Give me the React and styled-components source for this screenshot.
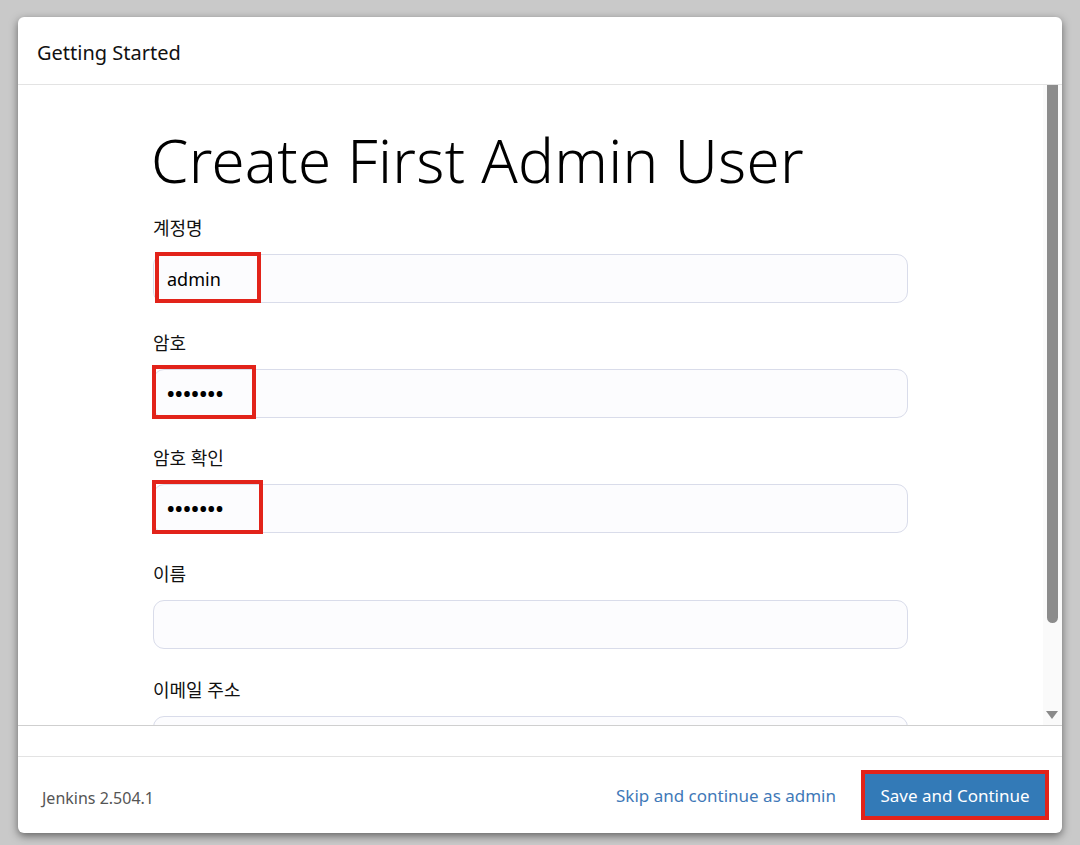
import styled, { createGlobalStyle } from 'styled-components';

const GlobalStyle = createGlobalStyle`
  html, body {
    margin: 0;
    padding: 0;
    background: #c9c9c9;
  }
  * {
    box-sizing: border-box;
  }
`;

const fields = [
  { id: 'username', label: '계정명', value: 'admin', type: 'text', mark: 106 },
  { id: 'password', label: '암호', value: '•••••••', type: 'password', mark: 104 },
  { id: 'confirm', label: '암호 확인', value: '•••••••', type: 'password', mark: 111 },
  { id: 'fullname', label: '이름', value: '', type: 'text' },
  { id: 'email', label: '이메일 주소', value: '', type: 'text' },
];

const App = () => {
  return (
    <>
      <GlobalStyle />
      <Page>
        <Dialog>
          <Header>
            <HeaderTitle>Getting Started</HeaderTitle>
          </Header>
          <Body>
            <ScrollArea>
              <Form>
                <Title>Create First Admin User</Title>
                {fields.map((field) => (
                  <Field key={field.id}>
                    <Label>{field.label}</Label>
                    <InputBox>
                      <InputText $dots={field.type === 'password'}>{field.value}</InputText>
                      {field.mark && (
                        <Highlight style={{ width: field.mark }} $type={field.type} />
                      )}
                    </InputBox>
                  </Field>
                ))}
              </Form>
            </ScrollArea>
            <ScrollTrack>
              <ScrollThumb />
              <ScrollArrow />
            </ScrollTrack>
          </Body>
          <Spacer />
          <Footer>
            <Version>Jenkins 2.504.1</Version>
            <Actions>
              <SkipLink href='#'>Skip and continue as admin</SkipLink>
              <ButtonFrame>
                <SaveButton>Save and Continue</SaveButton>
              </ButtonFrame>
            </Actions>
          </Footer>
        </Dialog>
      </Page>
    </>
  );
};

export default App;

const Page = styled.div`
  width: 1080px;
  height: 845px;
  padding: 17px 18px 12px 18px;
  font-family: 'Noto Sans', 'Noto Sans CJK KR', sans-serif;
`;

const Dialog = styled.div`
  width: 1044px;
  height: 816px;
  background: #fff;
  border-radius: 6px;
  box-shadow: 0 3px 9px rgba(0, 0, 0, 0.5);
  display: flex;
  flex-direction: column;
  overflow: hidden;
`;

const Header = styled.div`
  height: 68px;
  flex: 0 0 68px;
  border-bottom: 1px solid #e3e3e3;
  display: flex;
  align-items: center;
  padding: 4px 19px 0;
`;

const HeaderTitle = styled.h4`
  margin: 0;
  font-size: 20px;
  font-weight: 400;
  color: #111;
`;

const Body = styled.div`
  flex: 0 0 641px;
  display: flex;
  border-bottom: 1px solid #cfcfcf;
  overflow: hidden;
`;

const ScrollArea = styled.div`
  flex: 1;
  overflow: hidden;
`;

const Form = styled.div`
  padding: 31px 0 0 135px;
  width: 890px;
`;

const Title = styled.h1`
  margin: 0 0 12px -2px;
  font-size: 60px;
  line-height: 88px;
  font-weight: 300;
  color: #000;
  letter-spacing: 0.3px;
`;

const Field = styled.div`
  margin-bottom: 28px;

  &:nth-child(n + 4) {
    margin-bottom: 29px;
  }
`;

const Label = styled.div`
  font-size: 18px;
  line-height: 24px;
  color: #111;
  margin-bottom: 14px;
`;

const InputBox = styled.div`
  position: relative;
  width: 755px;
  height: 49px;
  border: 1px solid #d9dcea;
  border-radius: 11px;
  background: #fcfcfe;
  display: flex;
  align-items: center;
  padding: 0 13px;
`;

const InputText = styled.span`
  font-size: ${({ $dots }) => ($dots ? '20px' : '18px')};
  font-weight: ${({ $dots }) => ($dots ? 700 : 400)};
  color: #000;
  letter-spacing: ${({ $dots }) => ($dots ? '0.6px' : '0')};
`;

const Highlight = styled.div`
  position: absolute;
  top: ${({ $type }) => ($type === 'password' ? '-5px' : '-3px')};
  left: ${({ $type }) => ($type === 'password' ? '-2px' : '1px')};
  height: ${({ $type }) => ($type === 'password' ? '54px' : '51px')};
  border: 4px solid #e2231a;
  pointer-events: none;
`;

const ScrollTrack = styled.div`
  flex: 0 0 19px;
  background: #fafafa;
  display: flex;
  flex-direction: column;
  align-items: center;
  padding: 0 4px 0 3px;
`;

const ScrollThumb = styled.div`
  width: 11px;
  height: 538px;
  background: #8c8c8c;
  border-radius: 0 0 6px 6px;
`;

const ScrollArrow = styled.div`
  margin-top: auto;
  margin-bottom: 6px;
  width: 0;
  height: 0;
  border-left: 6px solid transparent;
  border-right: 6px solid transparent;
  border-top: 8px solid #8a8a8a;
`;

const Spacer = styled.div`
  flex: 0 0 31px;
  border-bottom: 1px solid #e3e3e3;
`;

const Footer = styled.div`
  flex: 1;
  display: flex;
  align-items: center;
  justify-content: space-between;
  padding: 0 13px 0 24px;
`;

const Version = styled.span`
  font-size: 16px;
  color: #555;
  margin-top: 6px;
`;

const Actions = styled.div`
  display: flex;
  align-items: center;
  gap: 25px;
`;

const SkipLink = styled.a`
  font-size: 17px;
  color: #3f79b8;
  text-decoration: none;
`;

const ButtonFrame = styled.div`
  border: 4px solid #e2231a;
  padding: 0;
`;

const SaveButton = styled.button`
  width: 180px;
  height: 42px;
  border: none;
  background: #337ab7;
  color: #fff;
  font-family: 'Noto Sans', sans-serif;
  font-size: 17px;
  cursor: pointer;
`;
